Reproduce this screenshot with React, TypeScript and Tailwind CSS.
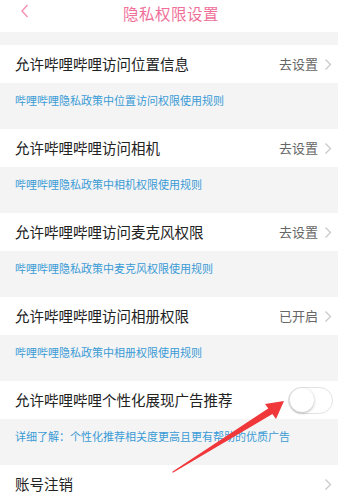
import React from "react"

const rows = [
  { title: "允许哔哩哔哩访问位置信息", value: "去设置", note: "哔哩哔哩隐私政策中位置访问权限使用规则" },
  { title: "允许哔哩哔哩访问相机", value: "去设置", note: "哔哩哔哩隐私政策中相机权限使用规则" },
  { title: "允许哔哩哔哩访问麦克风权限", value: "去设置", note: "哔哩哔哩隐私政策中麦克风权限使用规则" },
  { title: "允许哔哩哔哩访问相册权限", value: "已开启", note: "哔哩哔哩隐私政策中相册权限使用规则" },
]

function Chevron() {
  return (
    <svg width="8" height="13" viewBox="0 0 8 13" className="ml-[6px]">
      <path d="M1.5 1.5 L6.5 6.5 L1.5 11.5" fill="none" stroke="#c9c9c9" strokeWidth="1.3" />
    </svg>
  )
}

function Note({ children }: { children: React.ReactNode }) {
  return (
    <div className="h-[46px] pl-[15px] pt-[10px] text-[11px] leading-[14px] text-[#3a9bd6]">
      {children}
    </div>
  )
}

export default function App() {
  return (
    <div
      className="relative w-[338px] h-[497px] overflow-hidden bg-[#f4f4f4]"
      style={{ fontFamily: '"Noto Sans CJK SC", "Noto Sans", sans-serif' }}
    >
      {/* header */}
      <div className="relative h-[32px] bg-white flex justify-center pt-[2px]">
        <svg width="10" height="14" viewBox="0 0 10 14" className="absolute left-[20px] top-[4px]">
          <path d="M7.5 1 L2 7 L7.5 13" fill="none" stroke="#f58fb0" strokeWidth="1.4" />
        </svg>
        <span className="text-[15.5px] leading-[22px] text-[#f0709a] pl-[4px] tracking-[0.5px]">隐私权限设置</span>
      </div>
      <div className="h-[13px]" />

      {rows.map((r) => (
        <div key={r.title}>
          <div className="h-[38px] bg-white flex items-center justify-between pl-[15px] pr-[6px]">
            <span className="text-[14.5px] text-[#222]">{r.title}</span>
            <div className="flex items-center">
              <span className="text-[13px] text-[#666]">{r.value}</span>
              <Chevron />
            </div>
          </div>
          <Note>{r.note}</Note>
        </div>
      ))}

      {/* ad toggle */}
      <div className="h-[38px] bg-white flex items-center justify-between pl-[15px] pr-[5px]">
        <span className="text-[14.5px] text-[#222]">允许哔哩哔哩个性化展现广告推荐</span>
        <div className="w-[45px] h-[27px] rounded-full border border-[#e2e2e2] bg-white flex items-center px-[1px]">
          <div className="w-[24px] h-[24px] rounded-full bg-white shadow-[0_1px_3px_rgba(0,0,0,0.3)]" />
        </div>
      </div>
      <Note>详细了解：个性化推荐相关度更高且更有帮助的优质广告</Note>

      <div className="h-[38px] bg-white flex items-center justify-between pl-[15px] pr-[6px]">
        <span className="text-[14.5px] text-[#222]">账号注销</span>
        <Chevron />
      </div>

      {/* red annotation arrow */}
      <svg className="absolute left-0 top-0 pointer-events-none" width="338" height="497" viewBox="0 0 338 497">
        <path d="M173 472 L270 408 L273 413 Z" fill="#f0373a" stroke="#f0373a" strokeWidth="1.2" strokeLinejoin="round" />
        <path d="M284 401 L265 404 L276 419 Z" fill="#f0373a" />
      </svg>
    </div>
  )
}
